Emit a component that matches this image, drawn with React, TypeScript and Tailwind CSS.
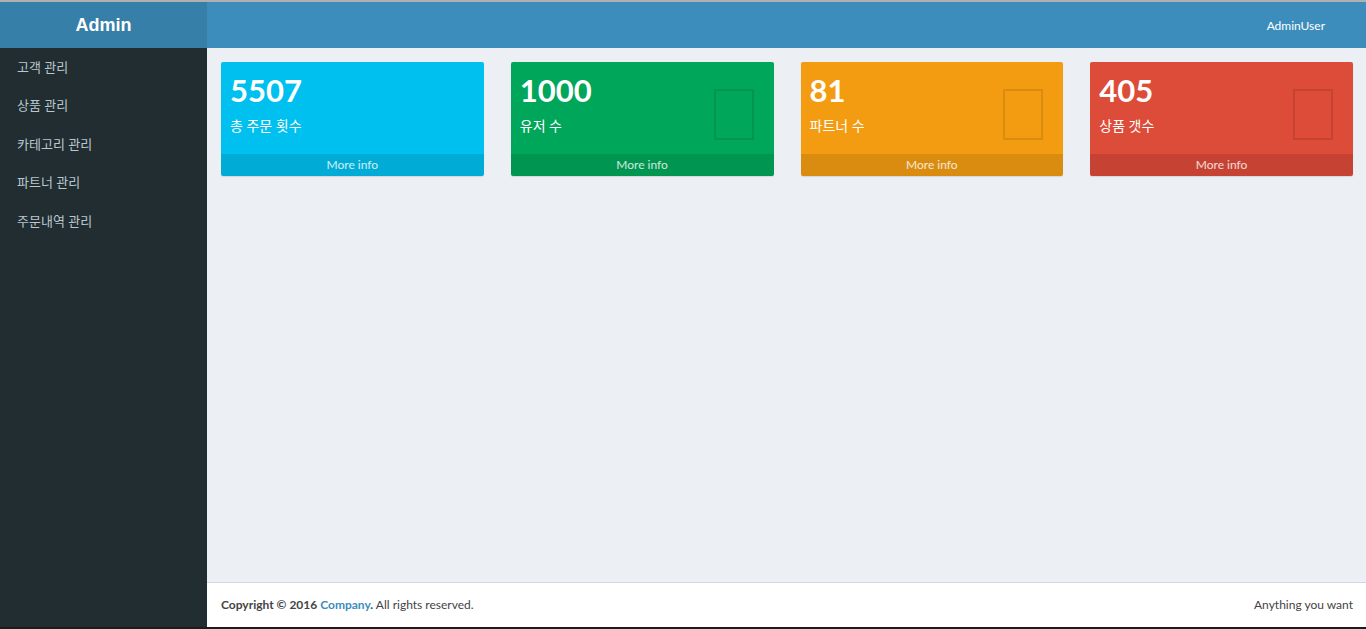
import React from "react";

const cards = [
  { n: "5507", label: "총 주문 횟수", bg: "bg-[#00c0ef]", icon: false },
  { n: "1000", label: "유저 수", bg: "bg-[#00a65a]", icon: true },
  { n: "81", label: "파트너 수", bg: "bg-[#f39c12]", icon: true },
  { n: "405", label: "상품 갯수", bg: "bg-[#dd4b39]", icon: true },
];

const menu = ["고객 관리", "상품 관리", "카테고리 관리", "파트너 관리", "주문내역 관리"];

export default function App() {
  return (
    <div
      className="h-[629px] w-full flex flex-col border-t-2 border-b-2 border-t-[#b0b0b0] border-b-[#1c1c1c] overflow-hidden"
      style={{ fontFamily: "Lato, 'Noto Sans CJK KR', sans-serif" }}
    >
      <header className="h-[46px] flex shrink-0">
        <div className="w-[207px] bg-[#367fa9] flex items-center justify-center text-white text-[18px] font-bold font-['Liberation_Sans',Arial,sans-serif]">
          Admin
        </div>
        <div className="flex-1 bg-[#3c8dbc] flex items-center justify-end pr-[41px] text-white text-[12px] pt-[1px]">
          AdminUser
        </div>
      </header>
      <div className="flex flex-1 min-h-0">
        <aside className="w-[207px] bg-[#222d32] shrink-0">
          {menu.map((m) => (
            <div key={m} className="h-[38.5px] flex items-center pl-[17px] text-[13px] text-[#b8c7ce]">
              {m}
            </div>
          ))}
        </aside>
        <div className="flex-1 flex flex-col min-w-0">
          <main className="flex-1 bg-[#ecf0f5] pt-[14px] pl-[14px] pr-[13px]">
            <div className="grid grid-cols-4 gap-[27px]">
              {cards.map((c) => (
                <div key={c.n} className={`${c.bg} relative rounded-[2px] shadow-[0_1px_1px_rgba(0,0,0,0.1)] text-white overflow-hidden`}>
                  <div className="h-[92px] pt-[11px] pl-[9px]">
                    <div className="text-[31px] leading-[34px] font-bold mb-[9px]">{c.n}</div>
                    <div className="text-[14px] leading-[20px]">{c.label}</div>
                  </div>
                  {c.icon && (
                    <div className="absolute right-[20px] top-[27px] w-[40px] h-[51px] border-2 border-black/10" />
                  )}
                  <div className="h-[22px] bg-black/10 flex items-center justify-center text-[12px] text-white/80">
                    More info
                  </div>
                </div>
              ))}
            </div>
          </main>
          <footer className="h-[45px] shrink-0 bg-white border-t border-[#d2d6de] flex items-center justify-between pl-[14px] pr-[13px] text-[12px] text-[#444]">
            <div>
              <span className="font-bold">Copyright © 2016 <span className="text-[#3c8dbc]">Company</span>.</span> All rights reserved.
            </div>
            <div>Anything you want</div>
          </footer>
        </div>
      </div>
    </div>
  );
}
